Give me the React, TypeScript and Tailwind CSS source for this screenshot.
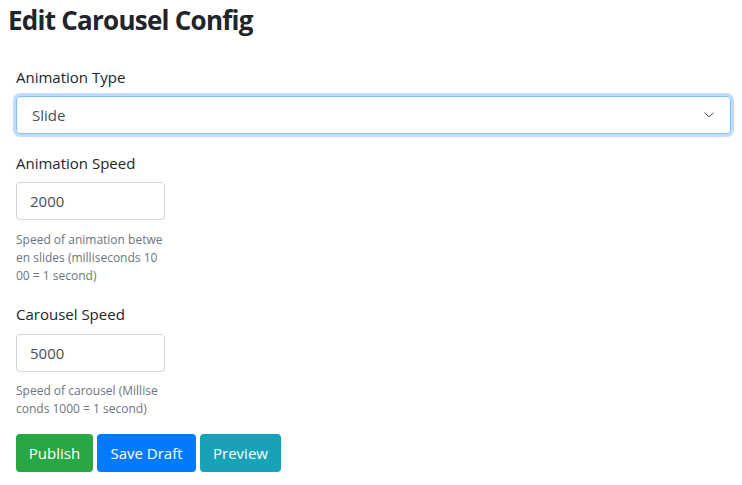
import React from "react";

export default function App() {
  const font = { fontFamily: '"Open Sans", "Noto Sans", sans-serif' };
  return (
    <div className="min-h-[485px] w-[742px] bg-white text-[#212529]" style={font}>
      <h2 className="pl-[8px] pt-[3px] text-[26px] font-bold leading-[34px] tracking-[-0.75px] text-[#212529]">
        Edit Carousel Config
      </h2>
      <div className="pl-4 pr-[11px] pt-[28px]">
        <div className="text-[15px] leading-[24px]">Animation Type</div>
        <div className="mt-[7px] flex h-[38px] items-center justify-between rounded-[4px] border border-[#80bdff] pl-[15px] pr-[16px] text-[15px] text-[#495057] shadow-[0_0_0_3px_rgba(0,123,255,0.25)]">
          <span>Slide</span>
          <svg width="10" height="6" viewBox="0 0 10 6" fill="none">
            <polyline points="0.5,0.5 5,5 9.5,0.5" stroke="#555" strokeWidth="1" />
          </svg>
        </div>

        <div className="mt-[17px] text-[15px] leading-[24px]">Animation Speed</div>
        <div className="mt-[7px] flex h-[38px] w-[149px] items-center rounded-[4px] border border-[#ced4da] pl-[13px] text-[15px] text-[#495057]">
          2000
        </div>
        <div className="mt-[11px] whitespace-nowrap text-[12px] leading-[18px] text-[#6c757d]">
          Speed of animation betwe
          <br />
          en slides (milliseconds 10
          <br />
          00 = 1 second)
        </div>

        <div className="mt-[17px] text-[15px] leading-[24px]">Carousel Speed</div>
        <div className="mt-[8px] flex h-[38px] w-[149px] items-center rounded-[4px] border border-[#ced4da] pl-[13px] text-[15px] text-[#495057]">
          5000
        </div>
        <div className="mt-[10px] whitespace-nowrap text-[12px] leading-[18px] text-[#6c757d]">
          Speed of carousel (Millise
          <br />
          conds 1000 = 1 second)
        </div>

        <div className="mt-[16px] flex gap-[4px]">
          <button className="h-[38px] w-[77px] rounded-[4px] bg-[#28a745] text-[15px] text-white">
            Publish
          </button>
          <button className="h-[38px] w-[99px] rounded-[4px] bg-[#007bff] text-[15px] text-white">
            Save Draft
          </button>
          <button className="h-[38px] w-[81px] rounded-[4px] bg-[#17a2b8] text-[15px] text-white">
            Preview
          </button>
        </div>
      </div>
    </div>
  );
}
